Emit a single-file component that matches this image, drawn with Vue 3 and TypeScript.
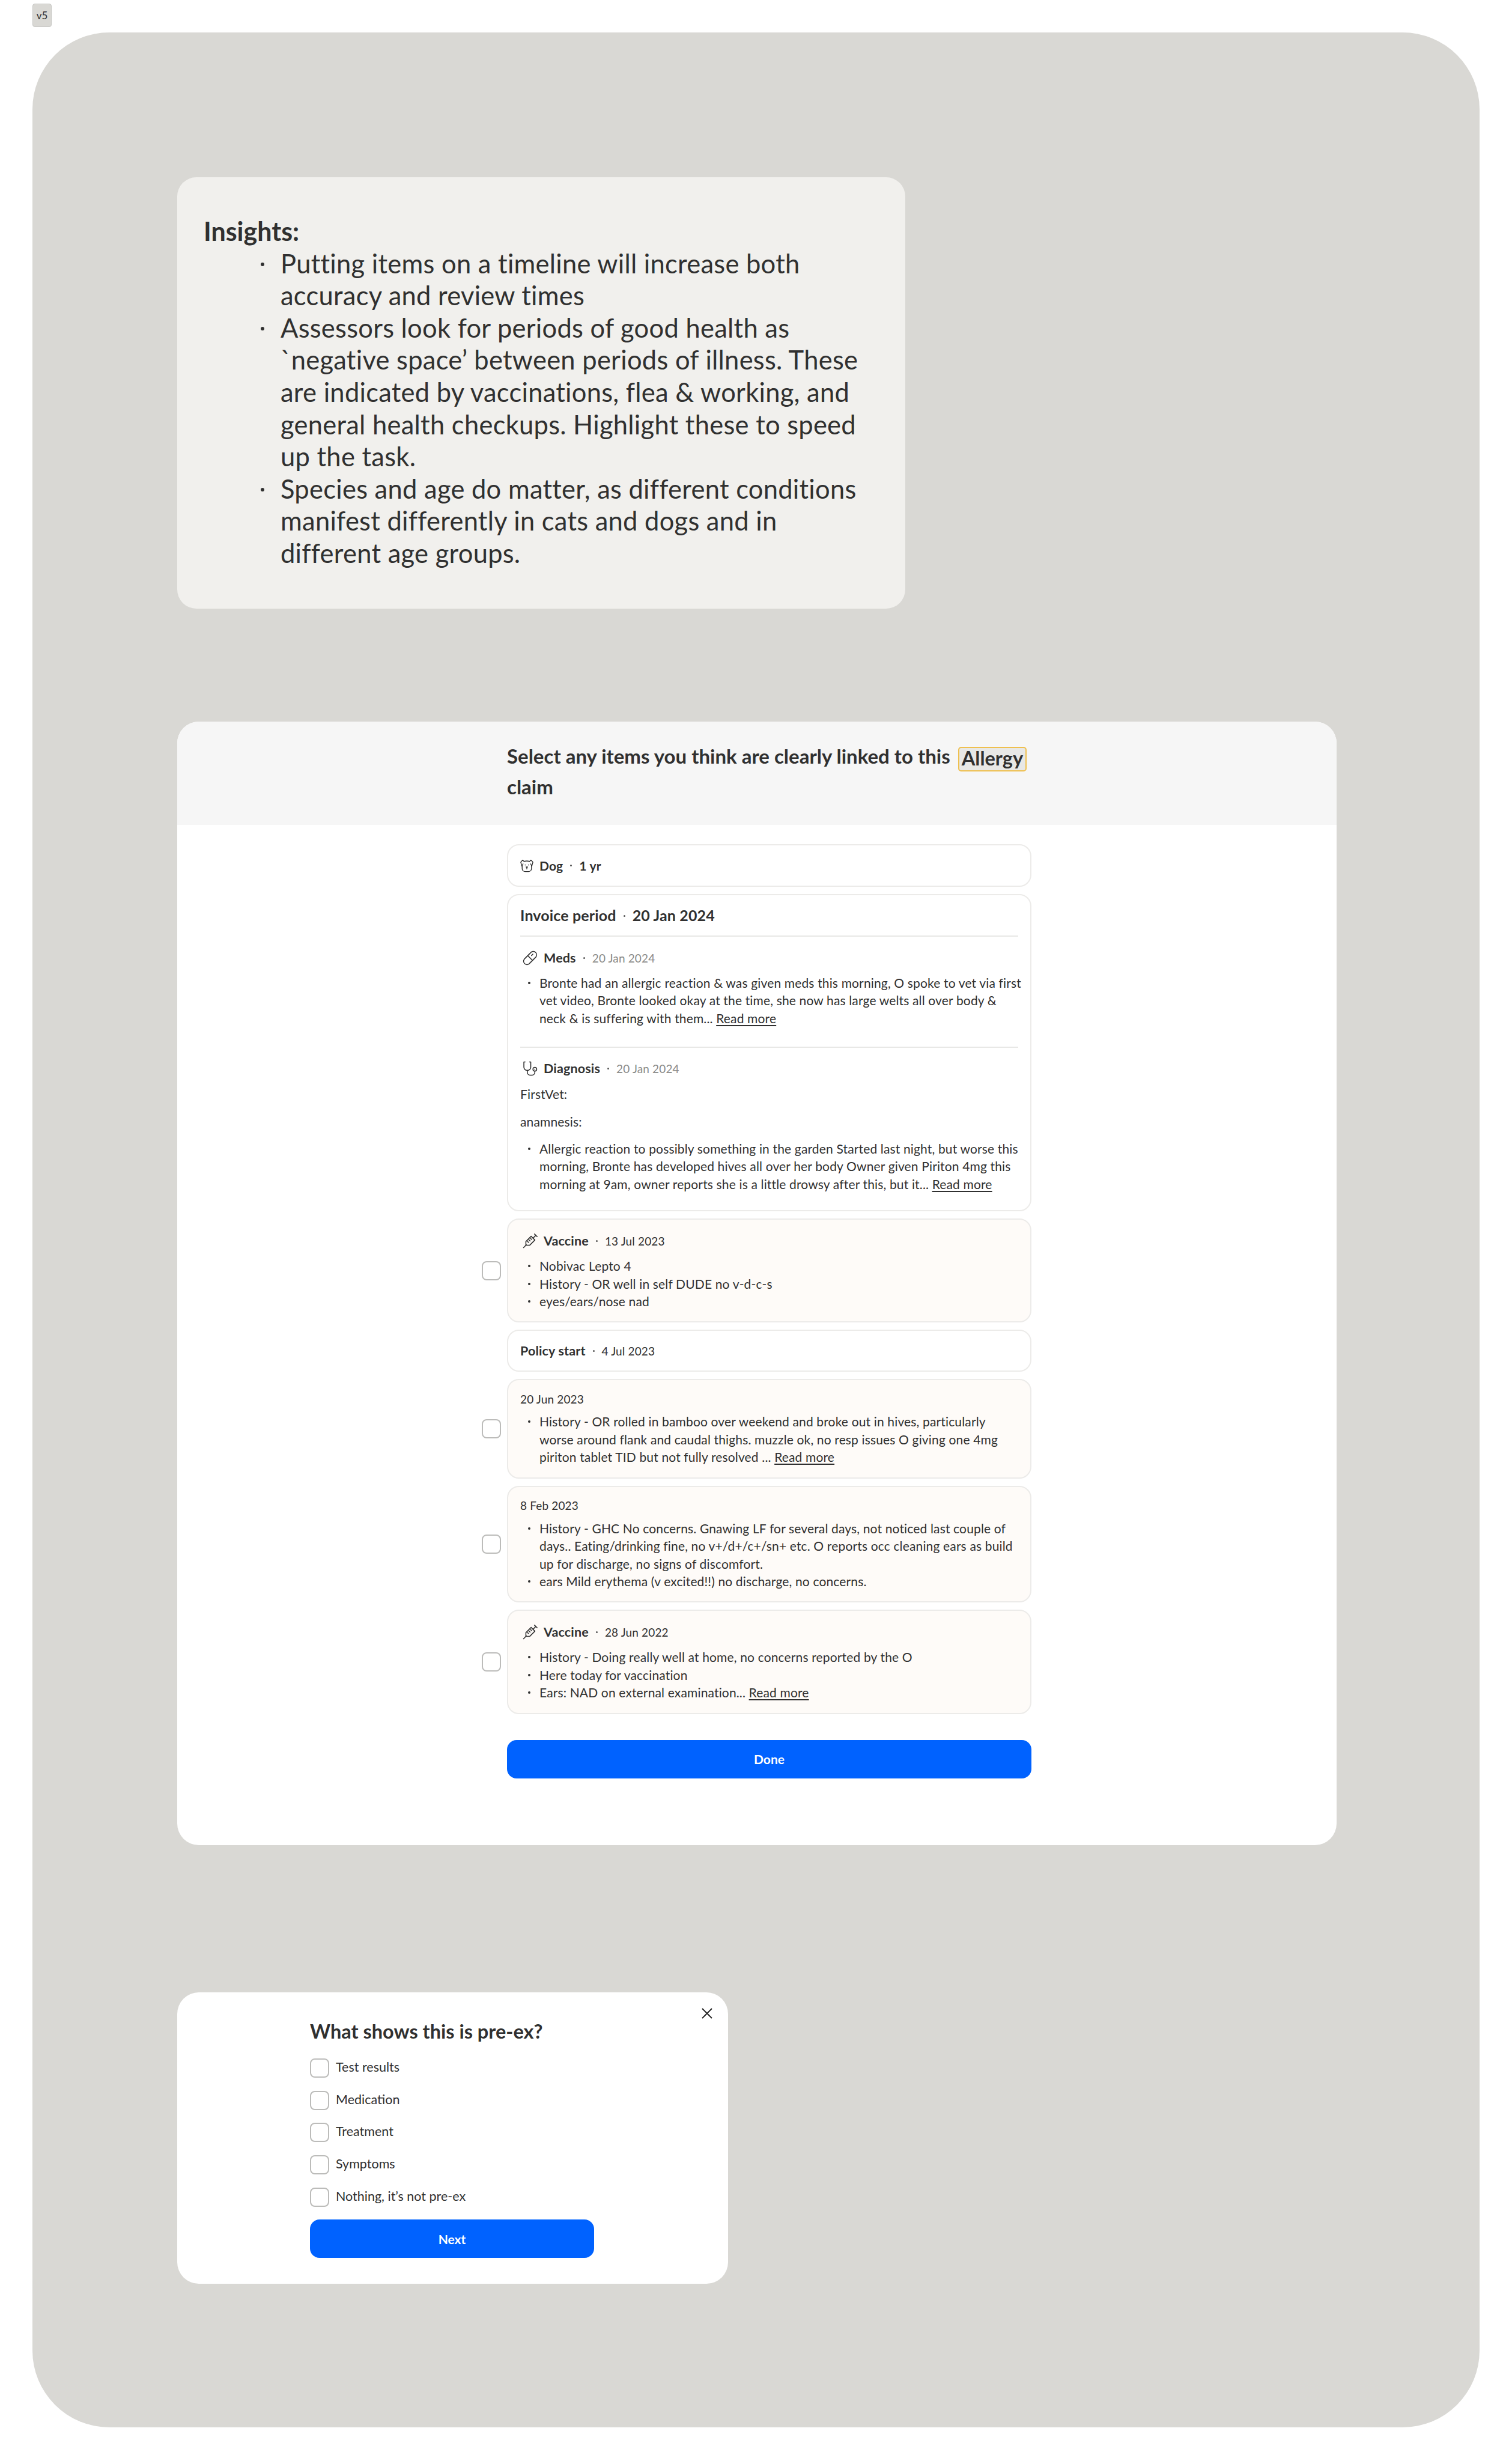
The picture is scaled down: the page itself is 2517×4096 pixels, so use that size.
<script setup lang="ts">
type Row = {
  check: boolean
  icon?: string
  name?: string
  date: string
  lines?: string[]
  more?: boolean
}

const icons: Record<string, string[]> = {
  dog: [
    'M7 4c3.2-1 6.8-1 10 0',
    'M7 4 4.5 1.5 1 5.5l2 7 2.2-4',
    'M17 4l2.5-2.5 3.5 4-2 7-2.2-4',
    'M3.5 12v4.5C3.5 20 6 22.5 9 22.5h6c3 0 5.5-2.5 5.5-6V12',
    'M10.6 14h2.8L12 15.6zM12 15.6v2M9 10.4v.3M15 10.4v.3',
  ],
  pill: [
    'M2.8 13.6 13.6 2.8a5.4 5.4 0 0 1 7.6 7.6L10.4 21.2a5.4 5.4 0 0 1-7.6-7.6Z',
    'M8.2 8.2l7.6 7.6',
    'M16.4 5.8l-2.2 2.2',
  ],
  scope: [
    'M4 1.5H2v8a5.5 5.5 0 0 0 11 0v-8h-2',
    'M7.5 15v3a4.5 4.5 0 0 0 4.5 4.5h3a4.5 4.5 0 0 0 4.5-4.5v-2',
    'M19.5 10a3 3 0 1 0 0 6 3 3 0 0 0 0-6ZM19.5 12.9v.2',
  ],
  syringe: [
    'M1.5 22.5 6 18',
    'M5.2 12.8 13.6 4.4l6 6L11.2 18.8H5.2Z',
    'M7.8 12.6l1.8 1.8M10.2 10.2l1.8 1.8M12.6 7.8l1.8 1.8',
    'M16.6 7.4 21 3',
    'M19 .8l4.2 4.2',
  ],
}

const rows: Row[] = [
  {
    check: true,
    icon: 'syringe',
    name: 'Vaccine',
    date: '13 Jul 2023',
    lines: ['Nobivac Lepto 4', 'History - OR well in self DUDE no v-d-c-s', 'eyes/ears/nose nad'],
  },
  { check: false, name: 'Policy start', date: '4 Jul 2023' },
  {
    check: true,
    date: '20 Jun 2023',
    lines: [
      'History - OR rolled in bamboo over weekend and broke out in hives, particularly\nworse around flank and caudal thighs. muzzle ok, no resp issues O giving one 4mg\npiriton tablet TID but not fully resolved ...',
    ],
    more: true,
  },
  {
    check: true,
    date: '8 Feb 2023',
    lines: [
      'History - GHC No concerns. Gnawing LF for several days, not noticed last couple of\ndays.. Eating/drinking fine, no v+/d+/c+/sn+ etc. O reports occ cleaning ears as build\nup for discharge, no signs of discomfort.',
      'ears Mild erythema (v excited!!) no discharge, no concerns.',
    ],
  },
  {
    check: true,
    icon: 'syringe',
    name: 'Vaccine',
    date: '28 Jun 2022',
    lines: [
      'History - Doing really well at home, no concerns reported by the O',
      'Here today for vaccination',
      'Ears: NAD on external examination...',
    ],
    more: true,
  },
]

const meds =
  'Bronte had an allergic reaction & was given meds this morning, O spoke to vet via first\nvet video, Bronte looked okay at the time, she now has large welts all over body &\nneck & is suffering with them...'
const diagnosis =
  'Allergic reaction to possibly something in the garden Started last night, but worse this\nmorning, Bronte has developed hives all over her body Owner given Piriton 4mg this\nmorning at 9am, owner reports she is a little drowsy after this, but it...'

const insights = [
  'Putting items on a timeline will increase both\naccuracy and review times',
  'Assessors look for periods of good health as\n`negative space’ between periods of illness. These\nare indicated by vaccinations, flea & working, and\ngeneral health checkups. Highlight these to speed\nup the task.',
  'Species and age do matter, as different conditions\nmanifest differently in cats and dogs and in\ndifferent age groups.',
]

const options = ['Test results', 'Medication', 'Treatment', 'Symptoms', 'Nothing, it’s not pre-ex']
</script>

<template>
  <div class="page">
    <div class="version">v5</div>
    <main class="frame">
      <section class="insights">
        <h2>Insights:</h2>
        <ul>
          <li v-for="text in insights" :key="text"><span>{{ text }}</span></li>
        </ul>
      </section>

      <section class="claim">
        <header class="claim-head">
          <h1>Select any items you think are clearly linked to this <mark>Allergy</mark> claim</h1>
        </header>
        <div class="timeline">
          <div class="row">
            <div class="card slim pet">
              <svg class="icon dog" viewBox="0 0 24 24"><path v-for="d in icons.dog" :key="d" :d="d" /></svg>
              <b>Dog</b><i class="sep"></i><b>1 yr</b>
            </div>
          </div>

          <div class="row">
            <div class="card invoice">
              <div class="invoice-head">
                <b>Invoice period</b><i class="sep"></i><b>20 Jan 2024</b>
              </div>
              <div class="entry">
                <div class="meta">
                  <svg class="icon" viewBox="0 0 24 24"><path v-for="d in icons.pill" :key="d" :d="d" /></svg>
                  <b>Meds</b><i class="sep"></i><span class="muted">20 Jan 2024</span>
                </div>
                <ul class="bullets">
                  <li><span>{{ meds }} <a>Read more</a></span></li>
                </ul>
              </div>
              <div class="entry last">
                <div class="meta">
                  <svg class="icon" viewBox="0 0 24 24"><path v-for="d in icons.scope" :key="d" :d="d" /></svg>
                  <b>Diagnosis</b><i class="sep"></i><span class="muted">20 Jan 2024</span>
                </div>
                <p>FirstVet:</p>
                <p>anamnesis:</p>
                <ul class="bullets">
                  <li><span>{{ diagnosis }} <a>Read more</a></span></li>
                </ul>
              </div>
            </div>
          </div>

          <div v-for="(row, i) in rows" :key="i" class="row">
            <span v-if="row.check" class="box"></span>
            <div class="card" :class="[row.lines ? 'tinted' : 'slim policy', { plain: !row.icon }]">
              <div class="meta">
                <svg v-if="row.icon" class="icon" viewBox="0 0 24 24"><path v-for="d in icons[row.icon]" :key="d" :d="d" /></svg>
                <template v-if="row.name"><b>{{ row.name }}</b><i class="sep"></i></template>
                <span>{{ row.date }}</span>
              </div>
              <ul v-if="row.lines" class="bullets">
                <li v-for="(line, n) in row.lines" :key="n">
                  <span>{{ line }} <a v-if="row.more && n === row.lines.length - 1">Read more</a></span>
                </li>
              </ul>
            </div>
          </div>

          <div class="row">
            <button class="primary done">Done</button>
          </div>
        </div>
      </section>

      <section class="modal">
        <svg class="close" viewBox="0 0 18 18"><path d="M1 1l16 16M17 1 1 17" /></svg>
        <div class="modal-body">
          <h3>What shows this is pre-ex?</h3>
          <label v-for="opt in options" :key="opt" class="option">
            <span class="box"></span>
            <span class="option-text">{{ opt }}</span>
          </label>
          <button class="primary next">Next</button>
        </div>
      </section>
    </main>
  </div>
</template>

<style>
html, body { margin: 0; background: #fff; }
</style>

<style scoped>
.page {
  font-family: Lato, "Open Sans", sans-serif;
  color: #303030;
  padding: 6px 54px 56px;
}
.version {
  width: 32px;
  height: 39px;
  box-sizing: border-box;
  display: flex;
  align-items: center;
  justify-content: center;
  background: #d9d8d4;
  border: 1px solid #c8c8c5;
  border-radius: 4px;
  font-size: 17px;
  margin-bottom: 9px;
}
.frame {
  box-sizing: border-box;
  height: 3986px;
  background: #d9d8d4;
  border-radius: 128px;
  padding: 241px 0 0 241px;
}

.insights {
  box-sizing: border-box;
  width: 1212px;
  height: 718px;
  background: #f1f0ed;
  border-radius: 32px;
  padding: 63px 44px;
  font-size: 43.5px;
  line-height: 53.6px;
  letter-spacing: 0.25px;
}
.insights h2 { margin: 0; font-size: 43px; font-weight: 700; letter-spacing: 0; }
.insights ul { margin: 0; padding: 0 0 0 95px; list-style: none; }
.insights li { display: flex; }
.insights li span { white-space: pre; }
.insights li::before {
  content: "";
  flex: none;
  width: 6px;
  height: 6px;
  border-radius: 50%;
  background: #303030;
  margin: 25px 27px 0 0;
}

.claim {
  box-sizing: border-box;
  width: 1930px;
  height: 1870px;
  margin-top: 188px;
  background: #fff;
  border-radius: 36px;
  overflow: hidden;
}
.claim-head {
  box-sizing: border-box;
  height: 172px;
  padding: 32px 0 0 549px;
  background: #f6f6f6;
}
.claim-head h1 {
  width: 873px;
  margin: 0;
  font-size: 33px;
  line-height: 51px;
  font-weight: 700;
}
mark {
  display: inline-block;
  box-sizing: border-box;
  margin-left: 5px;
  padding: 0 4px;
  height: 41px;
  line-height: 34px;
  font-size: 32.5px;
  vertical-align: -3px;
  background: #e8e8e6;
  color: inherit;
  border: 2px solid #efc04f;
  border-radius: 5px;
}
.timeline {
  display: flex;
  flex-direction: column;
  gap: 12px;
  padding: 32px 0 0 507px;
  width: 915px;
  font-size: 21px;
  line-height: 29.4px;
  letter-spacing: 0.15px;
}
.row {
  display: grid;
  grid-template-columns: 32px 873px;
  column-gap: 10px;
  align-items: center;
}
.row > .card, .row > button { grid-column: 2; }
.card {
  box-sizing: border-box;
  border: 2px solid #ecebe9;
  border-radius: 20px;
  background: #fff;
}
.card.tinted { background: #fefbf8; padding: 21px 20px 19px; }
.card.tinted .meta { margin-bottom: 12px; }
.card.tinted.plain { padding-top: 17px; }
.card.tinted.plain .meta { margin-bottom: 8px; }
.slim { display: flex; align-items: center; height: 71px; padding: 0 20px; }
.policy { height: 70px; }
.policy .meta { margin: 0; }
.pet { font-size: 21px; }
.pet .icon.dog { width: 22px; height: 22px; margin: 0 10px 0 0; }
.icon {
  flex: none;
  width: 25px;
  height: 25px;
  margin: 0 10px 0 4px;
  fill: none;
  stroke: #303030;
  stroke-width: 1.5;
  stroke-linecap: round;
  stroke-linejoin: round;
}
.sep {
  flex: none;
  width: 3px;
  height: 3px;
  margin: 0 12px;
  border-radius: 50%;
  background: #555;
}
b { font-weight: 700; }
.meta { display: flex; align-items: center; height: 29px; margin-bottom: 13px; font-size: 19px; }
.meta b { font-size: 21.5px; }
.muted { color: #8a8a88; }

.invoice { padding: 18px 20px 0; }
.invoice-head {
  display: flex;
  align-items: center;
  height: 32px;
  padding-bottom: 17px;
  border-bottom: 2px solid #e8e8e6;
  font-size: 25px;
}
.entry { padding: 21px 0 33px; border-bottom: 2px solid #e8e8e6; }
.entry .meta { margin-bottom: 12px; }
.entry.last { border-bottom: 0; padding: 20px 0 29px; }
.entry.last .meta { margin-bottom: 13px; }
.entry p { margin: 0 0 16px; }
.bullets { margin: 0; padding: 0 0 0 13px; list-style: none; }
.bullets li { display: flex; }
.bullets li span { white-space: pre; }
.bullets li::before {
  content: "";
  flex: none;
  width: 4px;
  height: 4px;
  border-radius: 50%;
  background: #303030;
  margin: 13px 15px 0 0;
}
a { text-decoration: underline; text-underline-offset: 3px; }

.box {
  box-sizing: border-box;
  display: block;
  width: 32px;
  height: 32px;
  border: 2px solid #bcbcba;
  border-radius: 8px;
  background: #fff;
}
.primary {
  box-sizing: border-box;
  height: 64px;
  border: 0;
  border-radius: 16px;
  background: #0062ff;
  color: #fff;
  font: 700 21px Lato, "Open Sans", sans-serif;
}
.done { margin-top: 31px; }

.modal {
  position: relative;
  box-sizing: border-box;
  width: 917px;
  height: 485px;
  margin-top: 245px;
  background: #fff;
  border-radius: 36px;
}
.close {
  position: absolute;
  top: 26px;
  right: 26px;
  width: 18px;
  height: 18px;
  fill: none;
  stroke: #222;
  stroke-width: 1.8;
}
.modal-body { width: 473px; margin-left: 221px; padding-top: 44px; }
h3 { margin: 0 0 24px; font-size: 32.5px; line-height: 42px; font-weight: 700; }
.option {
  display: flex;
  align-items: center;
  gap: 11px;
  height: 32px;
  margin-bottom: 21.7px;
  font-size: 21.5px;
}
.option-text { padding-bottom: 4px; }
.next { width: 473px; }
</style>
